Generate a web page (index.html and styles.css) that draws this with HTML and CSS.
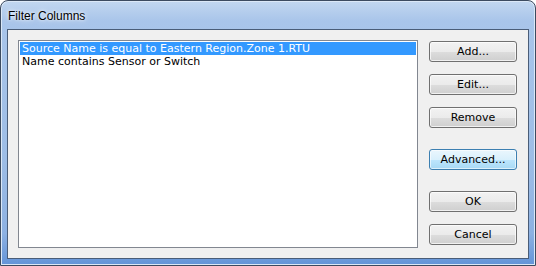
FILE: index.html
```html
<!DOCTYPE html>
<html>
<head>
<meta charset="utf-8">
<link rel="stylesheet" href="styles.css">
</head>
<body>
<div class="window">
  <div class="titlebar"><span class="title">Filter Columns</span></div>
  <div class="client">
    <div class="listbox">
      <div class="row selected">Source Name is equal to Eastern Region.Zone 1.RTU</div>
      <div class="row">Name contains Sensor or Switch</div>
    </div>
    <div class="buttons">
      <div class="group">
        <button class="btn">Add...</button>
        <button class="btn">Edit...</button>
        <button class="btn">Remove</button>
      </div>
      <div class="group">
        <button class="btn focused">Advanced...</button>
      </div>
      <div class="group">
        <button class="btn">OK</button>
        <button class="btn">Cancel</button>
      </div>
    </div>
  </div>
</div>
</body>
</html>
```

FILE: styles.css
```css
html, body {
  margin: 0;
  padding: 0;
  background: #ffffff;
}
body {
  font-family: "DejaVu Sans", sans-serif;
  font-size: 11px;
}
.window {
  box-sizing: border-box;
  width: 536px;
  height: 266px;
  border: 1px solid #3c4b60;
  border-radius: 8px 8px 0 0;
  background: linear-gradient(180deg, #c2d7f0 0px, #a9c5ea 20px, #9dbde6 60%, #8db1e2 88%, #6394d8 100%);
  box-shadow: inset 0 0 0 1px #dbe8f7;
  padding: 0 6px 6px 6px;
  display: flex;
  flex-direction: column;
}
.titlebar {
  height: 28px;
  display: flex;
  align-items: center;
  padding-left: 1px;
  box-sizing: border-box;
  padding-top: 1px;
}
.title {
  font-family: "Liberation Sans", Arial, sans-serif;
  font-size: 12px;
  color: #000;
  text-shadow: 0 0 6px rgba(255,255,255,0.9), 0 0 3px rgba(255,255,255,0.9);
}
.client {
  flex: 1;
  border: 1px solid #4a5d78;
  background: #f0f0f0;
  display: flex;
  padding: 10px 11px 10px 10px;
  gap: 11px;
}
.listbox {
  box-sizing: border-box;
  width: 400px;
  height: 208px;
  border: 1px solid #828790;
  background: #ffffff;
  padding: 1px;
}
.row {
  height: 13px;
  line-height: 13px;
  padding-left: 2px;
  color: #000;
  white-space: nowrap;
  font-family: "DejaVu Sans", sans-serif;
  font-size: 11px;
}
.row.selected {
  background: #3399ff;
  color: #ffffff;
}
.buttons {
  display: flex;
  flex-direction: column;
  padding-top: 1px;
  gap: 21px;
}
.group {
  display: flex;
  flex-direction: column;
  gap: 12px;
}
.btn {
  width: 88px;
  height: 21px;
  box-sizing: border-box;
  border: 1px solid #707070;
  border-radius: 3px;
  background: linear-gradient(180deg, #f2f2f2 0%, #ebebeb 50%, #dddddd 51%, #cfcfcf 100%);
  box-shadow: inset 0 0 0 1px rgba(255,255,255,0.7);
  font-family: "DejaVu Sans", sans-serif;
  font-size: 11px;
  color: #000;
  padding: 0;
  margin: 0;
}
.btn.focused {
  border-color: #3c7fb1;
  background: linear-gradient(180deg, #eaf6fd 0%, #d9f0fc 50%, #bee6fd 51%, #a7d9f5 100%);
  box-shadow: inset 0 0 0 1px rgba(255,255,255,0.6);
}
```
